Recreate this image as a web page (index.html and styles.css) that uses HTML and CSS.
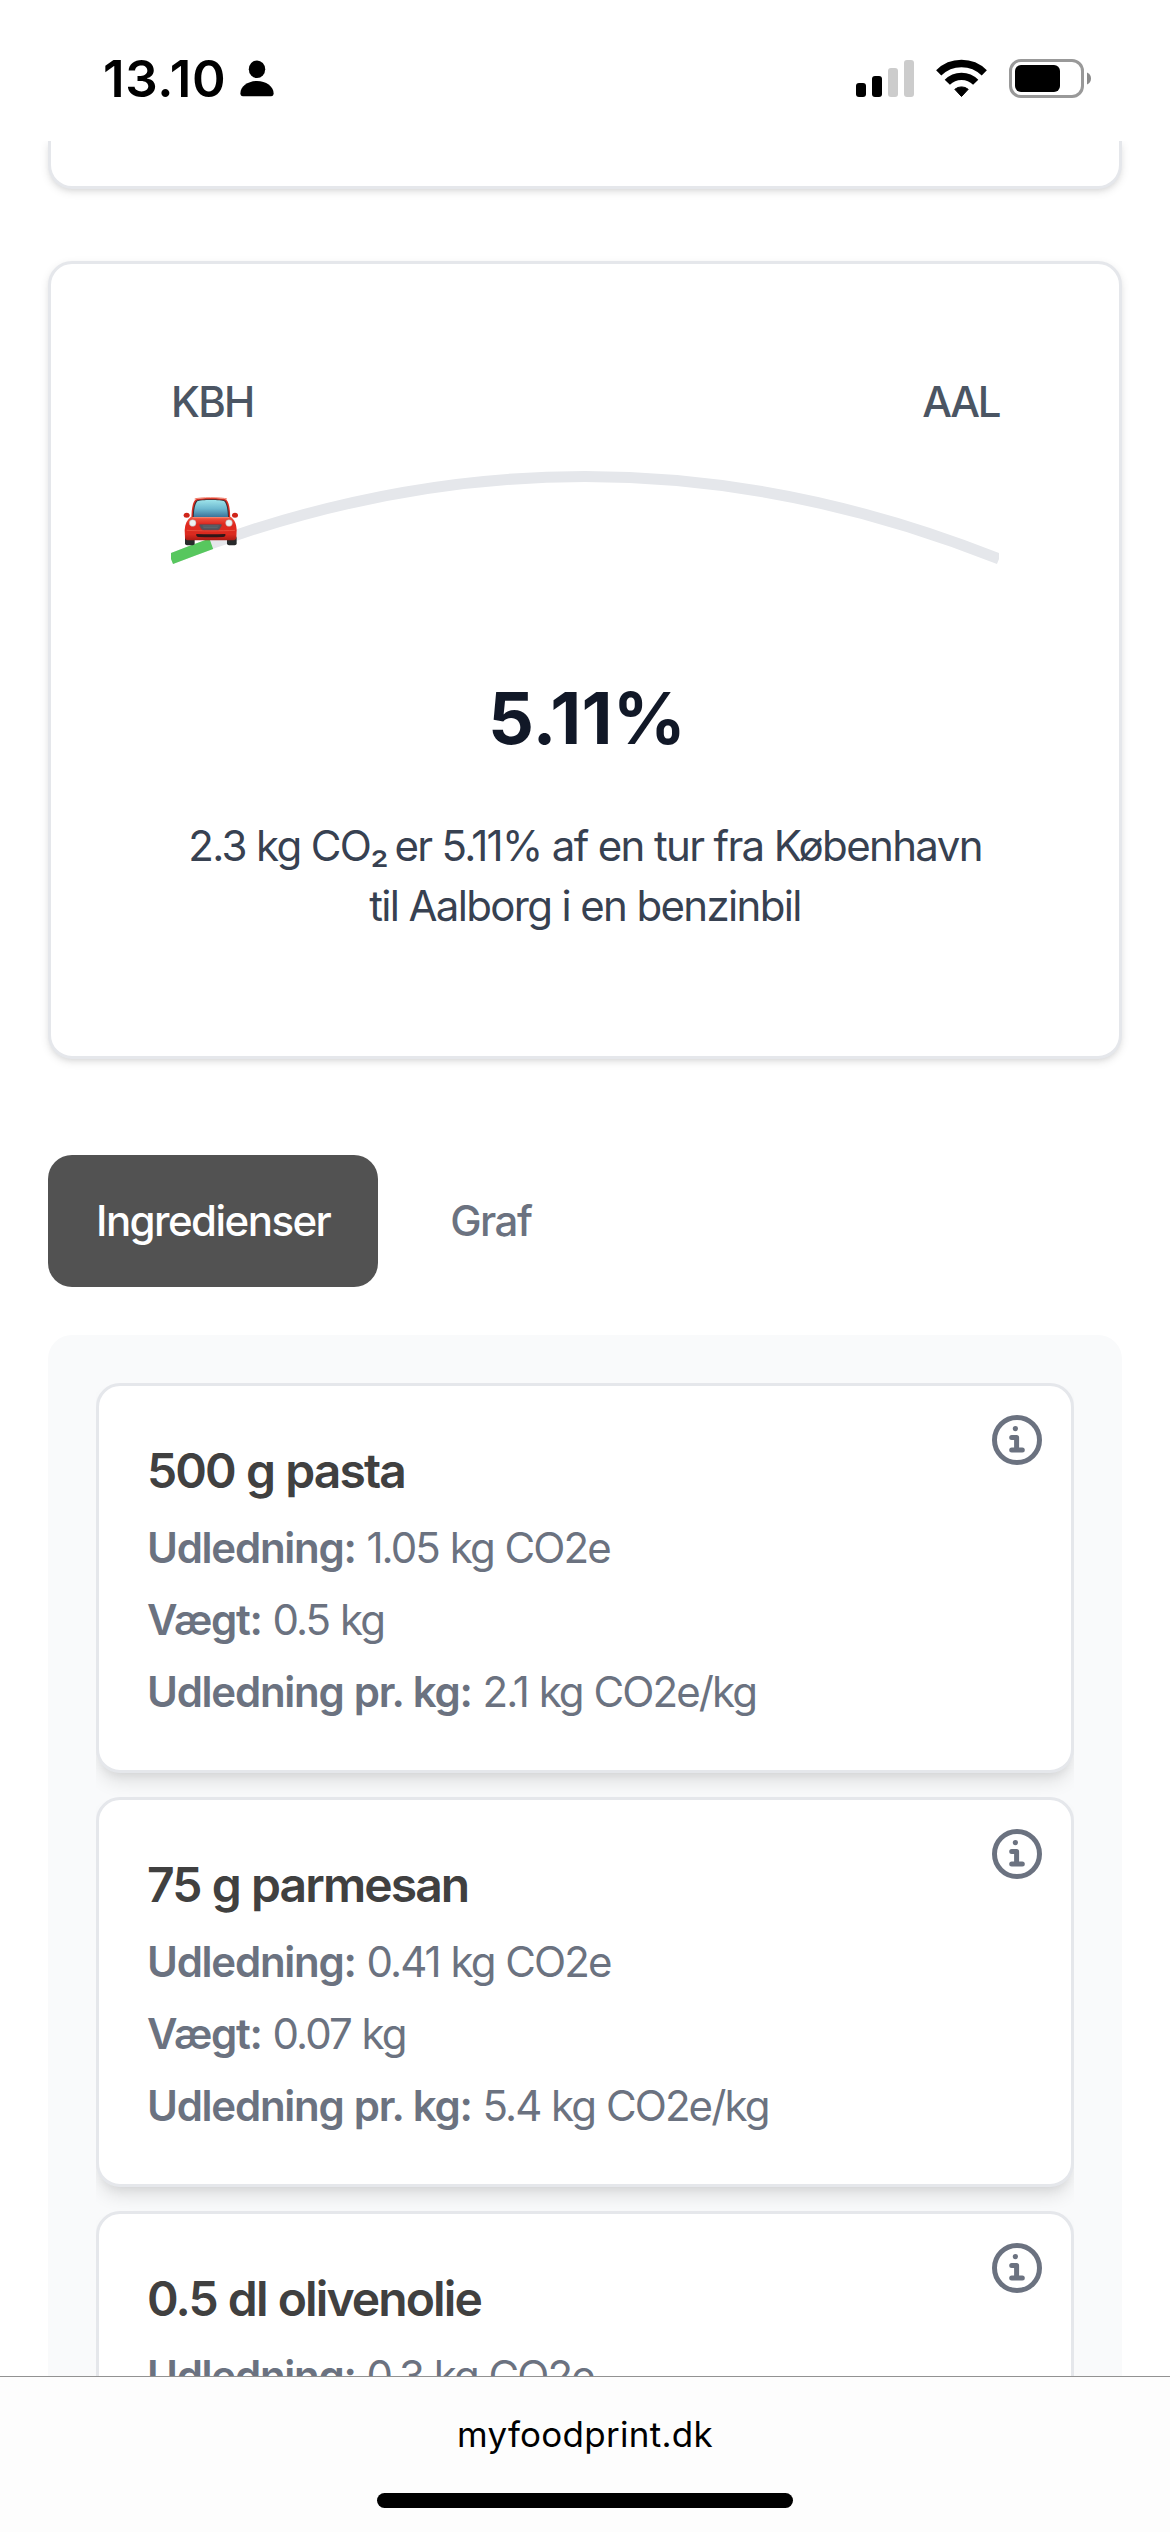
FILE: index.html
```
<!DOCTYPE html>
<html lang="da">
<head>
<meta charset="utf-8">
<title>myfoodprint.dk</title>
<link rel="stylesheet" href="styles.css">
</head>
<body>
<svg class="defs" width="0" height="0" aria-hidden="true">
  <symbol id="info" viewBox="0 0 50 50">
    <circle cx="25" cy="25" r="22.5" fill="none" stroke="currentColor" stroke-width="5"/>
    <circle cx="23.4" cy="13.6" r="2.6" fill="currentColor"/>
    <path d="M19.7 22.5H24.6V35M19.7 35H30.3" fill="none" stroke="currentColor" stroke-width="5" stroke-linecap="round" stroke-linejoin="round"/>
  </symbol>
</svg>

<header class="status">
  <div class="status-left">
    <span class="time">13.10</span>
    <svg class="person" width="34" height="37" viewBox="0 0 34 37">
      <ellipse cx="17" cy="9.2" rx="8.2" ry="8.8"/>
      <path d="M3 36.2C1.2 36.2.4 35.2.4 33.2C.4 26.500 8 21 17 21S33.600 26.500 33.600 33.200C33.600 35.200 32.800 36.200 31 36.200Z"/>
    </svg>
  </div>
  <div class="status-right">
    <svg class="signal" width="59" height="39" viewBox="0 0 59 39">
      <rect x="0" y="24" width="10" height="14" rx="3"/>
      <rect x="16" y="17" width="10" height="21" rx="3"/>
      <rect x="32" y="9" width="10" height="29" rx="3" fill="#ccc"/>
      <rect x="48" y="1" width="10" height="37" rx="3" fill="#ccc"/>
    </svg>
    <svg class="wifi" width="51" height="39" viewBox="0 -1 51 39">
      <path d="M2.700 12.900A32.400 32.400 0 0 1 48.300 12.900M11.300 22.300A19.800 19.800 0 0 1 39.700 22.300" fill="none" stroke="#000" stroke-width="7.300"/>
      <path d="M25.500 36.500L18.800 29.300A10.500 10.500 0 0 1 32.200 29.300Z" stroke="#000" stroke-width="1" stroke-linejoin="round"/>
    </svg>
    <svg class="battery" width="82" height="39" viewBox="0 0 82 39">
      <rect x="1.500" y="1.500" width="72" height="36" rx="10.500" fill="none" stroke="#999" stroke-width="3"/>
      <rect x="6" y="6" width="45" height="27" rx="6"/>
      <path d="M78 13.500C80.500 14.500 82 16.800 82 19.500S80.500 24.500 78 25.500Z" fill="#8a8a8a"/>
    </svg>
  </div>
</header>

<main class="page">
  <section class="card card-previous"></section>

  <section class="card trip">
    <div class="trip-ends"><span>KBH</span><span class="trip-to">AAL</span></div>
    <svg class="trip-arc" width="828" height="180" viewBox="0 0 828 180">
      <defs>
        <linearGradient id="glass" x1="0" y1="0" x2="0" y2="1"><stop offset="0" stop-color="#9de3ea"/><stop offset=".5" stop-color="#6db9d0"/><stop offset="1" stop-color="#3a7198"/></linearGradient>
        <linearGradient id="body" x1="0" y1="0" x2="0" y2="1"><stop offset="0" stop-color="#ef5a45"/><stop offset=".3" stop-color="#e0291f"/><stop offset=".75" stop-color="#da2a1f"/><stop offset="1" stop-color="#a91a14"/></linearGradient>
      </defs>
      <path d="M0 127Q414 -38 828 127" fill="none" stroke="#e5e7eb" stroke-width="11"/>
      <path d="M0 127Q414 -38 828 127" fill="none" stroke="#57c75e" stroke-width="11" stroke-dasharray="43 900"/>
      <g transform="translate(-1 48) scale(.3333)">
        <rect x="45" y="168" width="29" height="28" rx="6" fill="#282a2b"/>
        <rect x="171" y="168" width="29" height="28" rx="6" fill="#282a2b"/>
        <ellipse cx="50" cy="106" rx="9" ry="7.500" fill="#cf2419"/>
        <ellipse cx="195" cy="106" rx="9" ry="7.500" fill="#cf2419"/>
        <path d="M64 116C65 88 67 68 76 59C84 52 161 52 169 59C178 68 180 88 181 116Z" fill="#d92d20"/>
        <path d="M74 57C86 52 158 52 171 57" fill="none" stroke="#ee7864" stroke-width="3"/>
        <path d="M68 114C69 88 72 70 79 62C89 56 156 56 166 62C173 70 176 88 177 114Z" fill="#3c2b31"/>
        <path d="M71 112C72 88 75 72 82 64C90 59 155 59 163 64C170 72 173 88 174 112Z" fill="url(#glass)"/>
        <path d="M62 111H183C194 120 199 132 200 150L199 173C198 179 194 181 188 181H56C50 181 46 179 45 173L44 150C45 132 51 120 62 111Z" fill="url(#body)"/>
        <path d="M68 113H177" stroke="#f58a74" stroke-width="3"/>
        <path d="M50 151C90 153 155 153 195 151" fill="none" stroke="#f0604c" stroke-width="2"/>
        <circle cx="68" cy="129" r="10" fill="#edf1f1" stroke="#b9aaaa" stroke-width="1.500"/>
        <circle cx="177" cy="129" r="10" fill="#edf1f1" stroke="#b9aaaa" stroke-width="1.500"/>
        <path d="M90 133H153Q156 134 154 138L149 147Q147 150 142 150H101Q96 150 94 147L89 138Q88 134 90 133Z" fill="#50555c" stroke="#93343a" stroke-width="1.500"/>
        <path d="M98 138H146M100 143H143" stroke="#737a80" stroke-width="1.500"/>
        <path d="M79 162Q122 164 166 162Q168 170 159 171Q122 173 86 171Q77 170 79 162Z" fill="#2f1718"/>
      </g>
    </svg>
    <p class="trip-percent">5.11%</p>
    <p class="trip-text">2.3 kg CO<span class="subscript">₂</span> er 5.11% af en tur fra København<br>til Aalborg i en benzinbil</p>
  </section>

  <nav class="tabs">
    <a class="tab tab-active">Ingredienser</a>
    <a class="tab">Graf</a>
  </nav>

  <section class="panel">
    <div class="list">
      <article class="item">
        <svg class="info" width="50" height="50"><use href="#info"/></svg>
        <h3>500 g pasta</h3>
        <p><b>Udledning:</b> 1.05 kg CO2e</p>
        <p><b>Vægt:</b> 0.5 kg</p>
        <p><b>Udledning pr. kg:</b> 2.1 kg CO2e/kg</p>
      </article>
      <article class="item">
        <svg class="info" width="50" height="50"><use href="#info"/></svg>
        <h3>75 g parmesan</h3>
        <p><b>Udledning:</b> 0.41 kg CO2e</p>
        <p><b>Vægt:</b> 0.07 kg</p>
        <p><b>Udledning pr. kg:</b> 5.4 kg CO2e/kg</p>
      </article>
      <article class="item">
        <svg class="info" width="50" height="50"><use href="#info"/></svg>
        <h3>0.5 dl olivenolie</h3>
        <p><b>Udledning:</b> 0.3 kg CO2e</p>
      </article>
    </div>
  </section>
</main>

<footer class="browser-bar">
  <span class="address">myfoodprint.dk</span>
  <div class="home-indicator"></div>
</footer>
</body>
</html>
```
FILE: styles.css
```
* { box-sizing: border-box; margin: 0; padding: 0; }

body {
  width: 1170px;
  height: 2532px;
  display: flex;
  flex-direction: column;
  overflow: hidden;
  background: #fff;
  font-family: Inter, "Liberation Sans", sans-serif;
  font-size: 42px;
  line-height: 60px;
}

svg { display: block; flex: none; }
.defs { position: absolute; }

/* Status bar */
.status {
  flex: none;
  height: 141px;
  padding: 15px 79px 0 103px;
  display: flex;
  justify-content: space-between;
  align-items: center;
}
.status-left, .status-right { display: flex; align-items: center; }
.time { font-size: 51px; line-height: 51px; font-weight: 600; letter-spacing: 0.7px; }
.person { margin-left: 14px; }
.wifi { margin-left: 21px; }
.battery { margin-left: 22px; }

/* Page */
.page { flex: 1; min-height: 0; overflow: hidden; padding: 0 48px; }
.card {
  background: #fff;
  border: 3px solid #e5e7eb;
  border-radius: 24px;
  box-shadow: 0 3px 9px rgba(0, 0, 0, .1), 0 3px 6px -3px rgba(0, 0, 0, .1);
}
.card-previous { height: 48px; border-top: 0; border-radius: 0 0 24px 24px; }

.trip { height: 798px; margin-top: 72px; padding: 108px 120px 0; text-align: center; }
.trip-ends {
  display: flex;
  justify-content: space-between;
  font-weight: 500;
  letter-spacing: -1.7px;
  color: #4b5563;
}
.trip-to { letter-spacing: -2.4px; }
.trip-percent {
  margin-top: 70px;
  padding-left: 4px;
  font-size: 72px;
  line-height: 72px;
  font-weight: 700;
  letter-spacing: 0.2px;
  color: #111827;
}
.trip-text { margin-top: 62px; letter-spacing: -1.65px; color: #374151; white-space: nowrap; }
.subscript { letter-spacing: -4.5px; }

/* Tabs */
.tabs { display: flex; gap: 24px; margin-top: 96px; }
.tab {
  height: 132px;
  padding: 36px 48px;
  border-radius: 24px;
  font-weight: 500;
  letter-spacing: -1.55px;
  color: #6b7280;
}
.tab-active { background: #525252; color: #fff; }

/* Ingredients */
.panel { margin-top: 48px; padding: 48px; border-radius: 24px; background: #f9fafb; }
.list { display: flex; flex-direction: column; gap: 24px; overflow: hidden; }
.item {
  position: relative;
  flex: none;
  height: 390px;
  padding: 49px 48px 47px;
  display: flex;
  flex-direction: column;
  gap: 11px;
  background: #fff;
  border: 3px solid #e5e7eb;
  border-radius: 24px;
  box-shadow: 0 12px 18px -3px rgba(0, 0, 0, .1), 0 6px 12px -6px rgba(0, 0, 0, .1);
  color: #6b7280;
}
.item h3 {
  font-size: 48px;
  line-height: 72px;
  font-weight: 600;
  letter-spacing: -1.9px;
  word-spacing: 1px;
  color: #404040;
}
.item p { letter-spacing: -1.9px; word-spacing: 0.8px; white-space: nowrap; }
.item p + p { margin-top: 1px; }
.item b { font-weight: 600; letter-spacing: -1.25px; }
.info { position: absolute; top: 29px; right: 29px; color: #6b7280; }

/* Browser bar */
.browser-bar {
  flex: none;
  height: 156px;
  padding-top: 36px;
  display: flex;
  flex-direction: column;
  align-items: center;
  background: #fdfdfd;
  border-top: 1px solid #929292;
}
.address { font-size: 35px; line-height: 42px; letter-spacing: 0.27px; color: #000; }
.home-indicator { width: 416px; height: 15px; margin-top: 38px; border-radius: 8px; background: #000; }
```
